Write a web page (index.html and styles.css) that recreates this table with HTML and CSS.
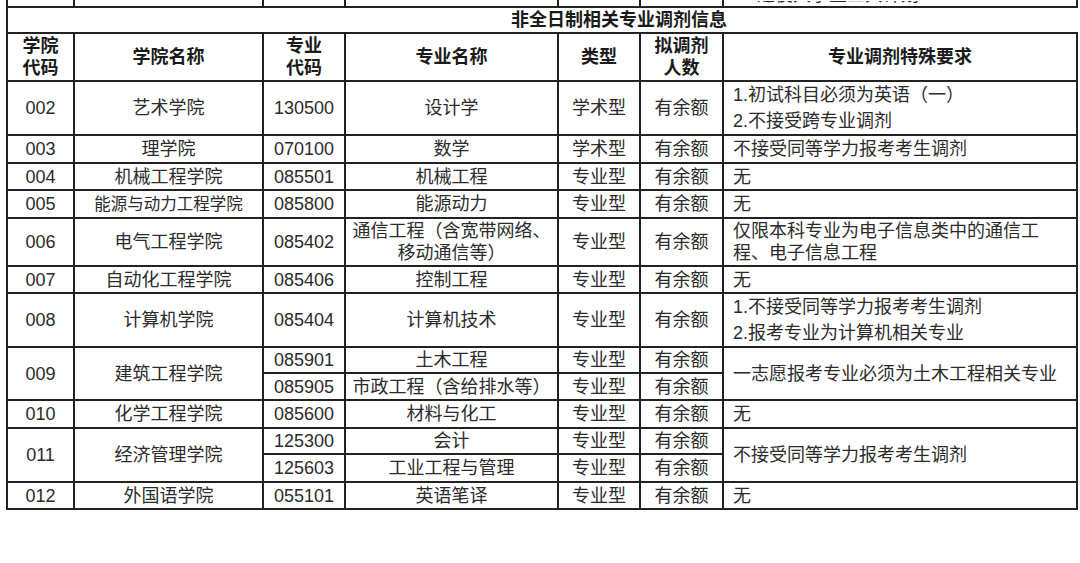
FILE: index.html
```html
<!DOCTYPE html>
<html lang="zh-CN">
<head>
<meta charset="utf-8">
<title>非全日制相关专业调剂信息</title>
<link rel="stylesheet" href="styles.css">
</head>
<body>
<table class="grid">
  <colgroup>
    <col class="c-code">
    <col class="c-school">
    <col class="c-mcode">
    <col class="c-major">
    <col class="c-type">
    <col class="c-num">
    <col class="c-req">
  </colgroup>
  <tbody>
    <tr class="r-cut">
      <td></td><td></td><td></td><td></td><td></td><td></td>
      <td class="req"><div class="clip"><span class="clip-text">3.退役大学生士兵计划</span></div></td>
    </tr>
    <tr class="r-title">
      <td colspan="7" class="title">非全日制相关专业调剂信息</td>
    </tr>
    <tr class="r-head">
      <th>学院<br>代码</th>
      <th>学院名称</th>
      <th>专业<br>代码</th>
      <th>专业名称</th>
      <th>类型</th>
      <th>拟调剂<br>人数</th>
      <th>专业调剂特殊要求</th>
    </tr>
    <tr class="r-54">
      <td>002</td><td>艺术学院</td><td>130500</td><td>设计学</td><td>学术型</td><td>有余额</td>
      <td class="req two"><p>1.初试科目必须为英语（一）</p><p>2.不接受跨专业调剂</p></td>
    </tr>
    <tr class="r-28">
      <td>003</td><td>理学院</td><td>070100</td><td>数学</td><td>学术型</td><td>有余额</td>
      <td class="req">不接受同等学力报考考生调剂</td>
    </tr>
    <tr class="r-27">
      <td>004</td><td>机械工程学院</td><td>085501</td><td>机械工程</td><td>专业型</td><td>有余额</td>
      <td class="req">无</td>
    </tr>
    <tr class="r-28">
      <td>005</td><td class="fit">能源与动力工程学院</td><td>085800</td><td>能源动力</td><td>专业型</td><td>有余额</td>
      <td class="req">无</td>
    </tr>
    <tr class="r-48">
      <td>006</td><td>电气工程学院</td><td>085402</td><td class="tight">通信工程（含宽带网络、<br>移动通信等）</td><td>专业型</td><td>有余额</td>
      <td class="req tight">仅限本科专业为电子信息类中的通信工<br>程、电子信息工程</td>
    </tr>
    <tr class="r-27">
      <td>007</td><td>自动化工程学院</td><td>085406</td><td>控制工程</td><td>专业型</td><td>有余额</td>
      <td class="req">无</td>
    </tr>
    <tr class="r-54">
      <td>008</td><td>计算机学院</td><td>085404</td><td>计算机技术</td><td>专业型</td><td>有余额</td>
      <td class="req two"><p>1.不接受同等学力报考考生调剂</p><p>2.报考专业为计算机相关专业</p></td>
    </tr>
    <tr class="r-26">
      <td rowspan="2">009</td><td rowspan="2">建筑工程学院</td><td>085901</td><td>土木工程</td><td>专业型</td><td>有余额</td>
      <td rowspan="2" class="req">一志愿报考专业必须为土木工程相关专业</td>
    </tr>
    <tr class="r-27">
      <td>085905</td><td>市政工程（含给排水等）</td><td>专业型</td><td>有余额</td>
    </tr>
    <tr class="r-28">
      <td>010</td><td>化学工程学院</td><td>085600</td><td>材料与化工</td><td>专业型</td><td>有余额</td>
      <td class="req">无</td>
    </tr>
    <tr class="r-26">
      <td rowspan="2">011</td><td rowspan="2">经济管理学院</td><td>125300</td><td>会计</td><td>专业型</td><td>有余额</td>
      <td rowspan="2" class="req">不接受同等学力报考考生调剂</td>
    </tr>
    <tr class="r-28">
      <td>125603</td><td>工业工程与管理</td><td>专业型</td><td>有余额</td>
    </tr>
    <tr class="r-27">
      <td>012</td><td>外国语学院</td><td>055101</td><td>英语笔译</td><td>专业型</td><td>有余额</td>
      <td class="req">无</td>
    </tr>
  </tbody>
</table>
</body>
</html>
```

FILE: styles.css
```css
html, body {
  margin: 0;
  padding: 0;
  background: #ffffff;
}

body {
  font-family: "Liberation Sans", "Noto Sans CJK SC", sans-serif;
  color: #2b2b2b;
}

.grid {
  margin-left: 6px;
  width: 1072px;
  table-layout: fixed;
  border-collapse: collapse;
  font-size: 18px;
}

.c-code { width: 67px; }
.c-school { width: 189px; }
.c-mcode { width: 82px; }
.c-major { width: 213px; }
.c-type { width: 82px; }
.c-num { width: 83px; }
.c-req { width: 354px; }

.grid td,
.grid th {
  border: 2px solid #222222;
  padding: 0 3px;
  text-align: center;
  vertical-align: middle;
  line-height: 22px;
  white-space: nowrap;
  overflow: hidden;
}

.grid th {
  font-weight: bold;
  color: #1a1a1a;
}

.r-cut td {
  border-top: none;
  height: 6px;
  padding: 0;
  vertical-align: bottom;
}

.clip {
  height: 5px;
  overflow: hidden;
}

.clip-text {
  display: block;
  margin-top: -17px;
  line-height: 22px;
  padding-left: 9px;
  text-align: left;
}

.r-title td.title {
  font-weight: bold;
  color: #1a1a1a;
  padding-left: 156px;
  border-right-style: hidden;
}

.r-title { height: 26px; }
.r-head { height: 48px; }
.r-54 { height: 54px; }
.r-48 { height: 48px; }
.r-28 { height: 28px; }
.r-27 { height: 27px; }
.r-26 { height: 26px; }

.grid td.req {
  text-align: left;
  padding-left: 9px;
}

.req.two p {
  margin: 0;
  line-height: 26px;
}

.tight {
  line-height: 22px;
}

.fit {
  font-size: 16.5px;
}
```
